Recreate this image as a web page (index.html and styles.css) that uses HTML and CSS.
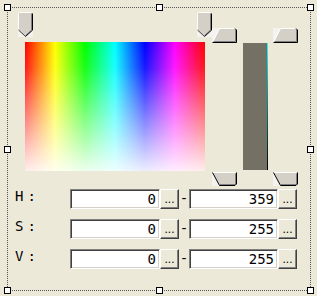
FILE: index.html
```html
<!DOCTYPE html>
<html>
<head>
<meta charset="utf-8">
<link rel="stylesheet" href="styles.css">
</head>
<body>
<div class="frame">
  <span class="handle h-tl"></span>
  <span class="handle h-tm"></span>
  <span class="handle h-tr"></span>
  <span class="handle h-ml"></span>
  <span class="handle h-mr"></span>
  <span class="handle h-bl"></span>
  <span class="handle h-bm"></span>
  <span class="handle h-br"></span>

  <div class="picker">
    <div class="hue-col">
      <div class="track">
        <svg class="thumb" width="15" height="25" viewBox="0 0 15 25">
          <rect x="0" y="17" width="15" height="8" fill="#f4f3ef"/>
          <path d="M1.5 .5H13.5L14.5 1.5V18L7.5 24.5L.5 18V1.5Z" fill="#d4d0c8"/>
          <path d="M.5 18V1.5L1.5 .5H13.5" fill="none" stroke="#fff"/>
          <path d="M13.5 1.5V18L7.5 23.5" fill="none" stroke="#808080"/>
          <path d="M14.5 1.5V18.2L7.5 24.5" fill="none" stroke="#000"/>
          <path d="M.5 18L7.5 24.5" fill="none" stroke="#404040"/>
        </svg>
        <svg class="thumb" width="15" height="25" viewBox="0 0 15 25">
          <rect x="0" y="17" width="15" height="8" fill="#f4f3ef"/>
          <path d="M1.5 .5H13.5L14.5 1.5V18L7.5 24.5L.5 18V1.5Z" fill="#d4d0c8"/>
          <path d="M.5 18V1.5L1.5 .5H13.5" fill="none" stroke="#fff"/>
          <path d="M13.5 1.5V18L7.5 23.5" fill="none" stroke="#808080"/>
          <path d="M14.5 1.5V18.2L7.5 24.5" fill="none" stroke="#000"/>
          <path d="M.5 18L7.5 24.5" fill="none" stroke="#404040"/>
        </svg>
      </div>
      <div class="sv-area"></div>
    </div>

    <div class="value-col">
      <svg class="trap trap-tl" width="25" height="15" viewBox="0 0 25 15">
        <rect width="25" height="15" fill="#f4f3ef"/>
        <path d="M7.5 .5H23L24.5 2V14.5H.5Z" fill="#d4d0c8"/>
        <path d="M.5 14.5L7.5 .5H23" fill="none" stroke="#fff"/>
        <path d="M23.5 1.5V13.5H1.5" fill="none" stroke="#808080"/>
        <path d="M23 .5L24.5 2V14.5H.5" fill="none" stroke="#000"/>
      </svg>
      <div class="value-bar"></div>
      <svg class="trap trap-tr" width="25" height="15" viewBox="0 0 25 15">
        <rect width="25" height="15" fill="#f4f3ef"/>
        <path d="M7.5 .5H23L24.5 2V14.5H.5Z" fill="#d4d0c8"/>
        <path d="M.5 14.5L7.5 .5H23" fill="none" stroke="#fff"/>
        <path d="M23.5 1.5V13.5H1.5" fill="none" stroke="#808080"/>
        <path d="M23 .5L24.5 2V14.5H.5" fill="none" stroke="#000"/>
      </svg>
      <svg class="trap trap-bl" width="25" height="14" viewBox="0 0 25 14">
        <rect width="25" height="14" fill="#f4f3ef"/>
        <path d="M.5 .5H24.5V12L23 13.5H7.5Z" fill="#d4d0c8"/>
        <path d="M.5 .5H23.5" fill="none" stroke="#fff"/>
        <path d="M23.5 1.5V12.5H8" fill="none" stroke="#808080"/>
        <path d="M.5 .5L7.5 13.5H23L24.5 12V.5" fill="none" stroke="#000"/>
      </svg>
      <svg class="trap trap-br" width="25" height="14" viewBox="0 0 25 14">
        <rect width="25" height="14" fill="#f4f3ef"/>
        <path d="M.5 .5H24.5V12L23 13.5H7.5Z" fill="#d4d0c8"/>
        <path d="M.5 .5H23.5" fill="none" stroke="#fff"/>
        <path d="M23.5 1.5V12.5H8" fill="none" stroke="#808080"/>
        <path d="M.5 .5L7.5 13.5H23L24.5 12V.5" fill="none" stroke="#000"/>
      </svg>
    </div>
  </div>

  <div class="fields">
    <div class="row">
      <span class="label"><span>H</span><span class="colon">:</span></span>
      <span class="input in-min">0</span><button class="btn">...</button>
      <span class="dash">-</span>
      <span class="input in-max">359</span><button class="btn">...</button>
    </div>
    <div class="row">
      <span class="label"><span>S</span><span class="colon">:</span></span>
      <span class="input in-min">0</span><button class="btn">...</button>
      <span class="dash">-</span>
      <span class="input in-max">255</span><button class="btn">...</button>
    </div>
    <div class="row">
      <span class="label"><span>V</span><span class="colon">:</span></span>
      <span class="input in-min">0</span><button class="btn">...</button>
      <span class="dash">-</span>
      <span class="input in-max">255</span><button class="btn">...</button>
    </div>
  </div>
</div>
</body>
</html>
```

FILE: styles.css
```css
html, body {
  margin: 0;
  padding: 0;
}
body {
  background: #ece9d8;
  width: 317px;
  height: 296px;
  overflow: hidden;
  font-family: "DejaVu Sans Mono", "Liberation Mono", monospace;
  color: #000;
}
.frame {
  position: relative;
  box-sizing: border-box;
  margin: 7px 0 0 7px;
  width: 304px;
  height: 284px;
  border: 1px dotted #555;
  padding: 4px 0 0 7px;
}
.handle {
  position: absolute;
  box-sizing: border-box;
  width: 7px;
  height: 7px;
  background: #fff;
  border: 1px solid #000;
}
.h-tl { left: -4px; top: -4px; }
.h-tm { left: 148px; top: -4px; }
.h-tr { right: -4px; top: -4px; }
.h-ml { left: -4px; top: 138px; }
.h-mr { right: -4px; top: 138px; }
.h-bl { left: -4px; bottom: -4px; }
.h-bm { left: 148px; bottom: -4px; }
.h-br { right: -4px; bottom: -4px; }

.picker {
  display: flex;
  margin-left: 3px;
}
.hue-col {
  width: 194px;
}
.track {
  display: flex;
  justify-content: space-between;
  height: 25px;
}
.thumb, .trap {
  display: block;
}
.sv-area {
  margin: 5px 0 0 7px;
  width: 180px;
  height: 129px;
  background:
    linear-gradient(to bottom, rgba(255,255,255,0) 0%, rgba(255,255,255,0.1) 20%, rgba(255,255,255,0.93) 100%),
    linear-gradient(to right, #f00 0%, #ff0 16.67%, #0f0 33.33%, #0ff 50%, #00f 66.67%, #f0f 83.33%, #f00 100%);
}
.value-col {
  display: grid;
  grid-template-columns: 25px 6px 25px 5px 25px;
  grid-template-rows: 15px 127px 2px 14px;
  margin-top: 16px;
}
.trap-tl { grid-column: 1; grid-row: 1; }
.trap-tr { grid-column: 5; grid-row: 1; }
.trap-bl { grid-column: 1; grid-row: 4; }
.trap-br { grid-column: 5; grid-row: 4; }
.value-bar {
  grid-column: 3;
  grid-row: 2;
  background:
    linear-gradient(to bottom, #1ff 0%, #000 100%) right top / 1px 100% no-repeat,
    #747063;
}

.fields {
  display: flex;
  flex-direction: column;
  gap: 10px;
  margin-top: 3px;
}
.row {
  display: flex;
  align-items: flex-start;
  height: 20px;
}
.label {
  display: flex;
  width: 55px;
  font-size: 14px;
  line-height: 15px;
}
.colon {
  margin-left: 4px;
}
.input {
  box-sizing: border-box;
  height: 20px;
  background: #fff;
  border-top: 1px solid #808080;
  border-left: 1px solid #808080;
  border-bottom: 1px solid #fff;
  border-right: 1px solid #fff;
  box-shadow: inset 1px 1px 0 #404040, inset -1px -1px 0 #d4d0c8;
  font-size: 14px;
  line-height: 14px;
  padding: 2px 3px 0 0;
  text-align: right;
}
.in-min { width: 90px; }
.in-max { width: 89px; }
.btn {
  box-sizing: border-box;
  width: 19px;
  height: 20px;
  margin: 0;
  padding: 0;
  background: #ece9d8;
  border-top: 1px solid #fff;
  border-left: 1px solid #fff;
  border-right: 1px solid #404040;
  border-bottom: 1px solid #404040;
  box-shadow: inset -1px -1px 0 #808080;
  font-family: "Liberation Sans", Arial, sans-serif;
  font-size: 12px;
  line-height: 15px;
  color: #000;
  text-align: center;
  display: block;
}
.dash {
  width: 10px;
  text-align: center;
  font-size: 14px;
  line-height: 18px;
}
```
